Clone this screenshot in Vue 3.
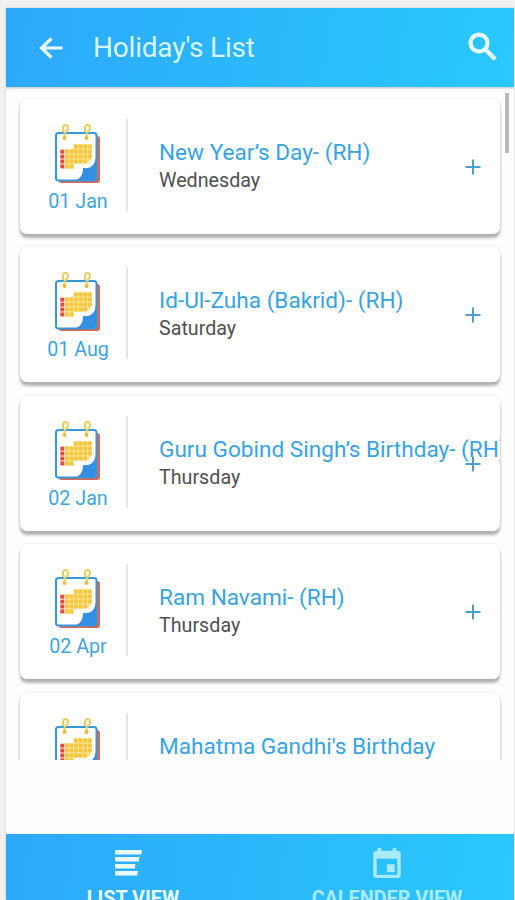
<script setup>
const holidays = [
  { date: '01 Jan', name: 'New Year’s Day- (RH)', day: 'Wednesday' },
  { date: '01 Aug', name: 'Id-Ul-Zuha (Bakrid)- (RH)', day: 'Saturday' },
  { date: '02 Jan', name: 'Guru Gobind Singh’s Birthday- (RH)', day: 'Thursday' },
  { date: '02 Apr', name: 'Ram Navami- (RH)', day: 'Thursday' },
  { name: 'Mahatma Gandhi\'s Birthday', partial: true },
]

const cells = []
for (let row = 0; row < 5; row++) {
  const from = row === 0 ? 3 : 1
  const to = row === 4 ? 3 : row === 3 ? 6 : 7
  for (let col = from; col < to; col++) cells.push({ x: 5.5 + col * 4.6, y: 20.8 + row * 4.9 })
}
</script>

<template>
  <div class="screen">
    <header class="bar">
      <svg class="back" viewBox="0 0 24 22" width="24" height="22">
        <path d="M12.5 1.5 2.5 11l10 9.5M2.8 11H23.5" fill="none" stroke="currentColor" stroke-width="3.2" />
      </svg>
      <h1>Holiday's List</h1>
      <svg class="search" viewBox="3 3 17.5 17.5" width="27" height="27">
        <path fill="currentColor" stroke="currentColor" stroke-width=".7" d="M15.5 14h-.79l-.28-.27A6.47 6.47 0 0 0 16 9.5 6.5 6.5 0 1 0 9.5 16c1.61 0 3.09-.59 4.23-1.57l.27.28v.79l5 4.99L20.49 19l-4.99-5zm-6 0C7.01 14 5 11.99 5 9.5S7.01 5 9.5 5 14 7.01 14 9.5 11.99 14 9.5 14z" />
      </svg>
    </header>

    <main class="list">
      <article v-for="h in holidays" :key="h.name" class="card">
        <div class="when">
          <svg class="calendar" viewBox="0 0 46 60" width="46" height="60">
            <path d="M5 12h37a3 3 0 0 1 3 3v41a3 3 0 0 1-3 3H7a4 4 0 0 1-4-4z" fill="#df654e" />
            <rect x="1" y="9" width="40.5" height="47.5" rx="2.5" fill="#fff" stroke="#3598db" stroke-width="2" />
            <path d="M41 33v21q0 2-2 2H21c5-2 7-6 7-12 8 1 12-3 13-11z" fill="#328fe1" />
            <path d="M18.5 20H37v13q-2 7-9 7h-9v5H10V25h8.5z" fill="#fbe18c" />
            <rect v-for="r in 4" :key="r" x="5.3" :y="20.8 + r * 4.9" width="4" height="4" fill="#e44a3e" />
            <rect v-for="(c, i) in cells" :key="'c' + i" :x="c.x" :y="c.y" width="3.5" height="3.7" fill="#f4c63e" />
            <path d="M8 8V4q0-3 2.5-3T13 4q0 3-3.5 5v5M30 8V4q0-3 2.5-3T35 4q0 3-3.5 5v5" fill="none" stroke="#e8cf60" stroke-width="2" />
            <circle cx="9.5" cy="14" r="2" fill="#e8bd3c" />
            <circle cx="31.5" cy="14" r="2" fill="#e8bd3c" />
          </svg>
          <span v-if="!h.partial" class="date">{{ h.date }}</span>
        </div>
        <div class="info">
          <h2>{{ h.name }}</h2>
          <p v-if="!h.partial">{{ h.day }}</p>
        </div>
        <svg v-if="!h.partial" class="plus" viewBox="0 0 16 16" width="16" height="16">
          <path d="M8 .5v15M.5 8h15" stroke="currentColor" stroke-width="2" />
        </svg>
      </article>
      <div class="thumb"></div>
    </main>

    <nav class="tabs">
      <div class="tab">
        <svg class="lines" viewBox="0 0 28 28" width="28" height="28">
          <path fill="currentColor" d="M1 1h27l-.7 4.5H1zM1 8h24.5l-.7 4.500H1zM1 15h20.500l-.7 4.500H1zM1 22h23l-.7 4.500H1z" />
        </svg>
        <span>LIST VIEW</span>
      </div>
      <div class="tab dim">
        <svg viewBox="3 1 18 20" width="28" height="30">
          <path fill="currentColor" stroke="currentColor" stroke-width=".3" d="M17 12h-5v5h5v-5zM16 1v2H8V1H6v2H5a2 2 0 0 0-2 2v14a2 2 0 0 0 2 2h14a2 2 0 0 0 2-2V5a2 2 0 0 0-2-2h-1V1h-2zm3 18H5V8h14v11z" />
        </svg>
        <span>CALENDER VIEW</span>
      </div>
    </nav>
  </div>
</template>

<style>
body {
  background: #f1f1f2;
  overflow: hidden;
}
</style>

<style scoped>
.screen {
  box-sizing: border-box;
  width: 508px;
  height: 892px;
  margin: 8px 0 0 6px;
  display: flex;
  flex-direction: column;
  background: #fefefe;
  box-shadow: 0 0 2px #c8c8c8;
  overflow: hidden;
  font-family: Roboto, sans-serif;
}
.bar {
  flex: none;
  height: 79px;
  box-sizing: border-box;
  padding: 0 18px 0 33px;
  display: flex;
  align-items: center;
  color: #e9fbff;
  background: linear-gradient(100deg, #2da8fa, #29c8fd);
  box-shadow: 0 1px 3px #bbb;
}
h1 {
  margin: 0 auto 0 30px;
  font-size: 28px;
  font-weight: 400;
  line-height: 36px;
  letter-spacing: -0.2px;
  color: #d8f5ff;
  white-space: nowrap;
}
.search {
  margin-top: -2px;
  overflow: visible;
}
.list {
  position: relative;
  flex: none;
  box-sizing: border-box;
  height: 673px;
  padding: 12px 14px 0;
  display: flex;
  flex-direction: column;
  gap: 13.4px;
  overflow: hidden;
}
.card {
  position: relative;
  flex: none;
  box-sizing: border-box;
  width: 480px;
  height: 135px;
  display: flex;
  background: #fff;
  border-radius: 7px;
  box-shadow: 0 4px 3px #b1b1b1, 0 0 3px #e2e2e2;
}
.when {
  width: 108px;
  box-sizing: border-box;
  margin: 20px 0 23px;
  padding: 5px 0 0 10px;
  border-right: 2px solid #e4e4e4;
  display: flex;
  flex-direction: column;
  align-items: center;
}
.calendar {
  flex: none;
}
.date {
  margin-top: 5px;
  font-size: 19.7px;
  line-height: 26px;
  color: #3ea5df;
  white-space: nowrap;
}
.info {
  flex: 1;
  min-width: 0;
  padding: 39px 0 0 31px;
  overflow: hidden;
}
h2 {
  margin: 0;
  font-size: 22.6px;
  font-weight: 400;
  line-height: 30px;
  color: #36a4e4;
  white-space: nowrap;
}
p {
  margin: 0;
  font-size: 19.7px;
  line-height: 26px;
  color: #505050;
}
.plus {
  position: absolute;
  right: 19px;
  top: 60px;
  color: #4a9fcc;
}
.thumb {
  position: absolute;
  right: 5px;
  top: 6px;
  width: 4px;
  height: 60px;
  background: #b8b8b8;
}
.tabs {
  flex: none;
  height: 66px;
  margin-top: auto;
  display: flex;
  background: linear-gradient(100deg, #2da8fa, #29c8fd);
  overflow: hidden;
}
.tab {
  flex: 1;
  padding-top: 14px;
  display: flex;
  flex-direction: column;
  align-items: center;
  color: #e9fbff;
}
.tab svg {
  flex: none;
  height: 30px;
}
.tab .lines {
  margin-right: 11px;
}
.tab span {
  margin-top: 9px;
  font-size: 19.8px;
  font-weight: 700;
  line-height: 24px;
  white-space: nowrap;
}
.dim {
  color: #a9eafd;
}
</style>
